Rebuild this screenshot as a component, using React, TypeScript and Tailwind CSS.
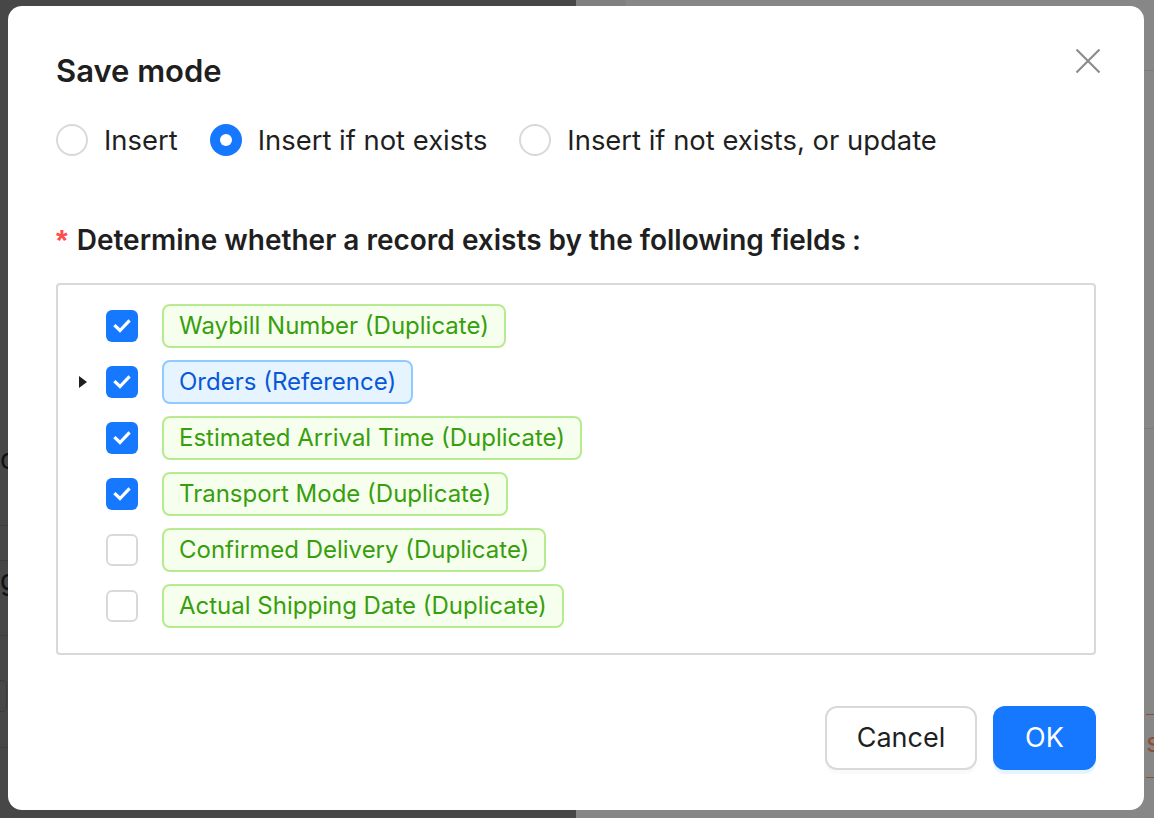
import { useState } from 'react';

type Field = {
  label: string;
  kind: 'dup' | 'ref';
  checked: boolean;
  expandable?: boolean;
};

const fields: Field[] = [
  { label: 'Waybill Number (Duplicate)', kind: 'dup', checked: true },
  { label: 'Orders (Reference)', kind: 'ref', checked: true, expandable: true },
  { label: 'Estimated Arrival Time (Duplicate)', kind: 'dup', checked: true },
  { label: 'Transport Mode (Duplicate)', kind: 'dup', checked: true },
  { label: 'Confirmed Delivery (Duplicate)', kind: 'dup', checked: false },
  { label: 'Actual Shipping Date (Duplicate)', kind: 'dup', checked: false },
];

const modes = ['Insert', 'Insert if not exists', 'Insert if not exists, or update'];

function Radio({ checked }: { checked: boolean }) {
  if (checked) {
    return (
      <span className="flex h-8 w-8 shrink-0 items-center justify-center rounded-full bg-[#1677ff]">
        <span className="h-3 w-3 rounded-full bg-white" />
      </span>
    );
  }
  return <span className="h-8 w-8 shrink-0 rounded-full border-2 border-[#d9d9d9] bg-white" />;
}

function Checkbox({ checked }: { checked: boolean }) {
  if (!checked) {
    return <span className="h-8 w-8 shrink-0 rounded-[6px] border-2 border-[#d9d9d9] bg-white" />;
  }
  return (
    <span className="flex h-8 w-8 shrink-0 items-center justify-center rounded-[6px] bg-[#1677ff]">
      <svg width="18" height="14" viewBox="0 0 18 14" fill="none">
        <path d="M2.5 7.2 L7 11.5 L15.5 2.5" stroke="white" strokeWidth="3.2" strokeLinecap="square" strokeLinejoin="miter" />
      </svg>
    </span>
  );
}

function Backdrop() {
  return (
    <div className="flex h-full w-full">
      <div className="relative w-[576px] bg-[#474747]">
        <div className="absolute left-0 top-[445px] text-[28px] leading-none text-[#111] font-['Inter']">d</div>
        <div className="absolute left-0 top-[566px] text-[28px] leading-none text-[#111] font-['Inter']">g</div>
        <div className="absolute left-0 top-[525px] h-px w-2 bg-[#3e3e3e]" />
        <div className="absolute left-0 top-[560px] h-px w-2 bg-[#3e3e3e]" />
        <div className="absolute left-0 top-[635px] h-px w-2 bg-[#3e3e3e]" />
        <div className="absolute left-0 top-[747px] h-px w-2 bg-[#3e3e3e]" />
        <div className="absolute left-[-8px] top-[680px] h-[32px] w-[15px] rounded-[5px] border border-[#3a3a3a]" />
      </div>
      <div className="relative flex-1 bg-[#878787]">
        <div className="absolute left-0 top-0 h-[6px] w-[50px] bg-[#808080]" />
        <div className="absolute right-0 top-[70px] h-px w-3 bg-[#7c7c7c]" />
        <div className="absolute right-0 top-[428px] h-px w-3 bg-[#7c7c7c]" />
        <div className="absolute right-0 top-[714px] h-px w-2 bg-[#8f4d36]" />
        <div className="absolute right-0 top-[777px] h-px w-2 bg-[#8f4d36]" />
        <div className="absolute right-[-6px] top-[730px] text-[26px] leading-none text-[#8f4d36] font-['Inter']">s</div>
      </div>
    </div>
  );
}

export default function App() {
  const [mode, setMode] = useState(1);

  return (
    <div className="relative h-[818px] w-[1154px] overflow-hidden font-['Inter',sans-serif]">
      <Backdrop />

      {/* modal */}
      <div className="absolute left-2 top-[6px] flex h-[804px] w-[1136px] flex-col rounded-[14px] bg-white px-12 pt-10 pb-10">
        <div className="flex items-start justify-between">
          <h2 className="text-[31px] font-semibold leading-[50px] text-[#1f1f1f]">Save mode</h2>
          <button className="mt-[-1px] mr-[-8px] flex h-8 w-8 items-center justify-center">
            <svg width="26" height="26" viewBox="0 0 26 26">
              <path d="M1.5 1.5 L24.5 24.5 M24.5 1.5 L1.5 24.5" stroke="#8c8c8c" strokeWidth="2.2" />
            </svg>
          </button>
        </div>

        <div className="mt-[22px] flex items-center">
          {modes.map((m, i) => (
            <label key={m} className="mr-4 flex cursor-pointer items-center" onClick={() => setMode(i)}>
              <Radio checked={mode === i} />
              <span className="px-4 text-[27.4px] leading-[44px] text-[#1f1f1f]">{m}</span>
            </label>
          ))}
        </div>

        <div className="mt-[56px] flex items-center text-[28px] font-semibold leading-[44px] text-[#1f1f1f]">
          <span className="mr-[9px] text-[30px] text-[#ff4d4f] font-['Liberation_Sans']">*</span>
          <span>Determine whether a record exists by the following fields</span>
          <span className="ml-[6px]">:</span>
        </div>

        <div className="mt-[21px] rounded-[4px] border-2 border-[#d9d9d9] pt-[13px] pb-[19px]">
          {fields.map((f) => (
            <div key={f.label} className="flex h-14 items-center">
              <span className="flex w-12 shrink-0 justify-end pr-[18px]">
                {f.expandable && (
                  <svg width="10" height="14" viewBox="0 0 10 14">
                    <path d="M1 1 L9 7 L1 13 Z" fill="#1f1f1f" />
                  </svg>
                )}
              </span>
              <Checkbox checked={f.checked} />
              <span
                className={
                  f.kind === 'dup'
                    ? 'ml-6 rounded-[8px] border-2 border-[#b7eb8f] bg-[#f6ffed] px-[15px] text-[24px] leading-[40px] text-[#389e0d]'
                    : 'ml-6 rounded-[8px] border-2 border-[#91caff] bg-[#e6f4ff] px-[15px] text-[24px] leading-[40px] text-[#0958d9]'
                }
              >
                {f.label}
              </span>
            </div>
          ))}
        </div>

        <div className="mt-auto flex justify-end gap-4">
          <button className="h-16 w-[152px] rounded-[12px] border-2 border-[#d9d9d9] bg-white text-[27px] text-[#1f1f1f] shadow-[0_4px_0_rgba(0,0,0,0.02)]">
            Cancel
          </button>
          <button className="h-16 w-[103px] rounded-[12px] bg-[#1677ff] text-[27px] text-white shadow-[0_4px_0_rgba(5,145,255,0.1)]">
            OK
          </button>
        </div>
      </div>
    </div>
  );
}
